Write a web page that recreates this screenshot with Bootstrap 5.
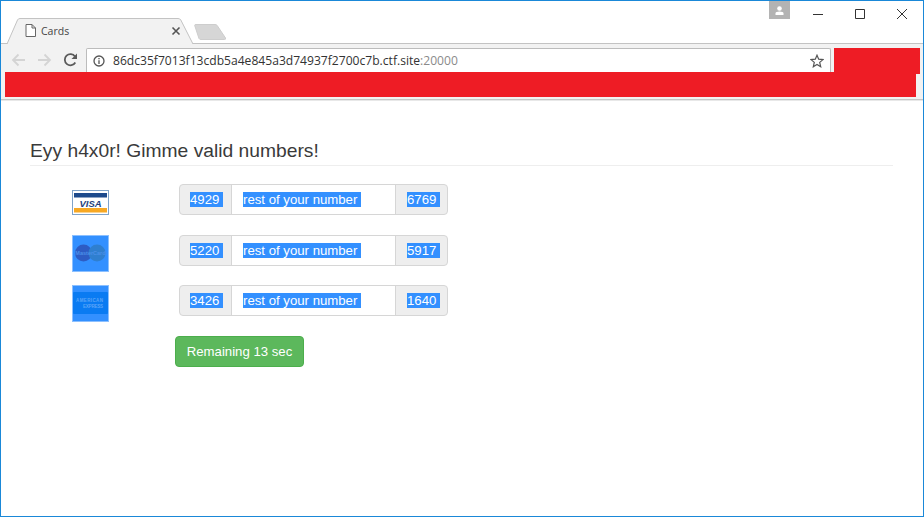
<!DOCTYPE html>
<html lang="en">
<head>
<meta charset="utf-8">
<title>Cards</title>
<link rel="stylesheet" href="https://cdn.jsdelivr.net/npm/bootstrap@5.3.0/dist/css/bootstrap.min.css">
<style>
html,body{margin:0;height:100%;overflow:hidden;background:#fff}
body{font-family:"Liberation Sans",Arial,sans-serif;font-size:13.2px;color:#333}
.win{height:517px;border:1px solid #1a88d8;display:flex;flex-direction:column;overflow:hidden}
.strip{height:43px;flex:none;border-bottom:1px solid #c3c3c3;padding-left:5px;position:relative}
.tabb{position:relative;width:189px;height:26px;margin-bottom:-1px;padding:5px 0 0 35px;font:10.5px/16px "Open Sans",sans-serif;color:#444}
.tabshape{position:absolute;left:0;top:0}
.tablabel{position:relative}
.ticon-page{position:absolute;left:19px;top:6px}
.ticon-close{position:absolute;left:165px;top:8px}
.ghost{margin-bottom:3px;margin-left:-1px}
.avatar{width:21px;height:18px;background:#b3b3b3;margin-left:auto;margin-right:23px;align-self:flex-start}
.winbtns{align-self:flex-start;gap:32px;padding:8px 16px 0 0}
.toolbar{background:#f2f2f2;flex:none;height:56px;border-bottom:1px solid #c6c6c6;box-shadow:0 1px 0 #e8e8e8}
.navrow{height:28px;padding:4px 3px 0 10px}
.navico{width:26px;flex:none;padding-top:5px}
.navico svg{display:block}
.omni{width:747px;margin-left:-3px;height:24px;background:#fff;border:1px solid #bcbcbc;border-bottom:0;border-radius:2px 2px 0 0;padding:0 6px;font:12.1px/22px "Open Sans",sans-serif;color:#333;white-space:nowrap}
.omni em{font-style:normal;color:#8a8a8a}
.redtop{width:86px;height:26px;background:#ee1c25;margin-left:3px;flex:none}
.redbar{height:25px;margin:0 7px 0 4px;background:#ee1c25}
.pagebody{padding:39px 30px 0 29px}
.headline{font-family:"Liberation Sans",Arial,sans-serif;font-size:19.25px;font-weight:400;line-height:20px;margin:0;padding:2px 0 4px 0;border-bottom:1px solid #eee;color:#3a3a3a}
.cardlist{padding-top:18px}
.crow{height:50.5px}
.cardimg{width:37px;height:37px;margin-left:42px;margin-right:70px;flex:none;display:block}
.ingrp{width:269px;flex:none;height:31px;flex-wrap:nowrap}
.ingrp .input-group-text,.ingrp .form-control{font-size:13.2px;line-height:15px;height:31px;padding:7px 0 0 11px;display:block;color:#fff;border-color:#d6d6d6;text-align:left}
.ingrp .input-group-text{width:53px;flex:none;background:#eee;border-radius:4px}
.ingrp .input-group-text:first-child{padding-left:10px}
.ingrp .form-control{flex:1 1 auto;width:164px;background:#fff}
.sel{background:#3390ff;color:#fff;white-space:pre;display:inline-block;line-height:15px}
.timer{margin-left:145px;width:129px;height:31px;padding:0;font-size:13.2px;line-height:29px;background:#5cb85c;border-color:#4cae4c;color:#fff;border-radius:4px}
</style>
</head>
<body>
<div class="win">
  <div class="strip d-flex align-items-end">
    <div class="tabb">
      <svg class="tabshape" width="189" height="26" viewBox="0 0 189 26"><path d="M1 26 L11.5 2 Q12.2 .5 14 .5 L172 .5 Q174 .5 174.8 2 L187 26" fill="#f2f2f2" stroke="#c3c3c3"/></svg>
      <svg class="ticon-page" width="11" height="13" viewBox="0 0 11 13"><path d="M1 .5H7L10.5 4V12.5H1Z M7 .5V4H10.5" fill="#fff" stroke="#666"/></svg>
      <span class="tablabel">Cards</span>
      <svg class="ticon-close" width="10" height="10" viewBox="0 0 10 10"><path d="M1.5 1.5L8.5 8.5M8.5 1.5L1.5 8.5" stroke="#555" stroke-width="1.6"/></svg>
    </div>
    <svg class="ghost" width="33" height="16" viewBox="0 0 33 16"><path d="M.7 1.5Q.5.5 2 .5H21Q22.5 .5 23.2 1.5L31.5 14Q32 15.5 30.5 15.5H7Q5.5 15.5 5 14.5Z" fill="#d6d6d6" stroke="#cdcdcd"/></svg>
    <div class="avatar d-flex align-items-center justify-content-center">
      <svg width="9" height="9" viewBox="0 0 9 9"><circle cx="4.5" cy="2.5" r="2.3" fill="#fff"/><path d="M.5 9V7.5Q.5 5.6 4.5 5.6T8.5 7.5V9Z" fill="#fff"/></svg>
    </div>
    <div class="winbtns d-flex">
      <svg width="10" height="10" viewBox="0 0 10 10"><path d="M0 5.5H10" stroke="#333"/></svg>
      <svg width="10" height="10" viewBox="0 0 10 10"><path d="M.5 .5H9.5V9.5H.5Z" fill="none" stroke="#333"/></svg>
      <svg width="10" height="10" viewBox="0 0 10 10"><path d="M0 0L10 10M10 0L0 10" stroke="#333"/></svg>
    </div>
  </div>
  <div class="toolbar">
    <div class="navrow d-flex align-items-start">
      <div class="navico"><svg width="15" height="14" viewBox="0 0 15 14"><path d="M14 7H2M7.5 1.5L2 7L7.5 12.5" fill="none" stroke="#d4d4d4" stroke-width="1.8"/></svg></div>
      <div class="navico"><svg width="15" height="14" viewBox="0 0 15 14"><path d="M1 7H13M7.5 1.5L13 7L7.5 12.5" fill="none" stroke="#d4d4d4" stroke-width="1.8"/></svg></div>
      <div class="navico"><svg width="15" height="14" viewBox="0 0 15 14"><path d="M12.3 9.5A5.6 5.6 0 1 1 12 3.5" fill="none" stroke="#5a5a5a" stroke-width="1.8"/><path d="M14 .5V6H8.5Z" fill="#5a5a5a"/></svg></div>
      <div class="omni d-flex align-items-center">
        <svg class="me-2" width="12" height="12" viewBox="0 0 12 12"><circle cx="6" cy="6" r="5" fill="none" stroke="#555" stroke-width="1.3"/><path d="M6 5.2V9M6 3V4.3" stroke="#555" stroke-width="1.3"/></svg>
        <span>86dc35f7013f13cdb5a4e845a3d74937f2700c7b.ctf.site<em>:20000</em></span>
        <svg class="ms-auto" width="14" height="14" viewBox="0 0 14 14"><path d="M7 1.2L8.7 5.2L13 5.6L9.7 8.4L10.7 12.7L7 10.4L3.3 12.7L4.3 8.4L1 5.6L5.3 5.2Z" fill="none" stroke="#555" stroke-width="1.2"/></svg>
      </div>
      <div class="redtop"></div>
    </div>
    <div class="redbar"></div>
  </div>
  <div class="pagebody">
    <h4 class="headline">Eyy h4x0r! Gimme valid numbers!</h4>
    <div class="cardlist">
      <div class="crow d-flex align-items-start">
        <svg class="cardimg" viewBox="0 0 37 37"><rect x=".5" y="6.5" width="36" height="24" fill="#fff" stroke="#7fa3c9"/><rect x="2" y="9" width="33" height="4.5" fill="#1d4a8c"/><rect x="2" y="24" width="33" height="4.5" fill="#f7a823"/><text x="18.5" y="22.5" text-anchor="middle" font-family="Liberation Sans" font-size="9.5" font-weight="700" font-style="italic" fill="#1d3f7c">VISA</text></svg>
        <div class="input-group ingrp">
          <span class="input-group-text"><span class="sel">4929 </span></span>
          <div class="form-control"><span class="sel">rest of your number </span></div>
          <span class="input-group-text"><span class="sel">6769 </span></span>
        </div>
      </div>
      <div class="crow d-flex align-items-start">
        <svg class="cardimg" viewBox="0 0 37 37"><rect x=".5" y=".5" width="36" height="36" fill="#3390ff" stroke="#8cc0ff"/><circle cx="11.5" cy="18" r="8.5" fill="#2d5cc4"/><circle cx="25" cy="18" r="8.5" fill="#2f7fcf"/><text x="18.5" y="20" text-anchor="middle" font-family="Liberation Sans" font-size="5.5" font-weight="700" fill="#4a8fe8">MasterCard</text></svg>
        <div class="input-group ingrp">
          <span class="input-group-text"><span class="sel">5220 </span></span>
          <div class="form-control"><span class="sel">rest of your number </span></div>
          <span class="input-group-text"><span class="sel">5917 </span></span>
        </div>
      </div>
      <div class="crow d-flex align-items-start">
        <svg class="cardimg" viewBox="0 0 37 37"><rect x=".5" y=".5" width="36" height="36" fill="#3390ff" stroke="#8cc0ff"/><rect x="1" y="7" width="35" height="22" rx="1" fill="#0a7bf2"/><text x="4" y="16.5" font-family="Liberation Sans" font-size="4.5" font-weight="700" fill="#5aa5f8" textLength="27">AMERICAN</text><text x="11" y="23" font-family="Liberation Sans" font-size="4.5" font-weight="700" fill="#5aa5f8" textLength="20">EXPRESS</text></svg>
        <div class="input-group ingrp">
          <span class="input-group-text"><span class="sel">3426 </span></span>
          <div class="form-control"><span class="sel">rest of your number </span></div>
          <span class="input-group-text"><span class="sel">1640 </span></span>
        </div>
      </div>
    </div>
    <button type="button" class="btn btn-success timer d-block">Remaining 13 sec</button>
  </div>
</div>
<script src="https://cdn.jsdelivr.net/npm/bootstrap@5.3.0/dist/js/bootstrap.bundle.min.js"></script>
</body>
</html>
